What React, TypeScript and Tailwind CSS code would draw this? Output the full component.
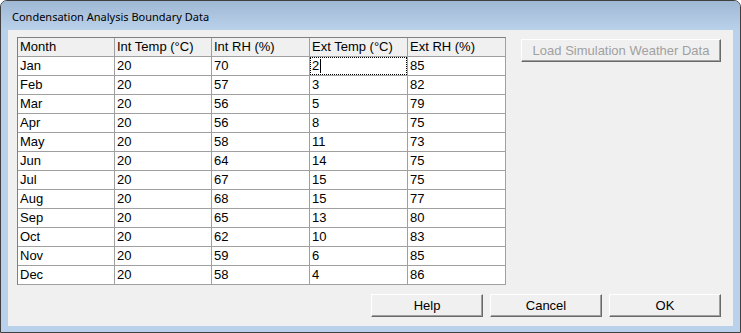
import React from 'react'

const cols = ['Month', 'Int Temp (°C)', 'Int RH (%)', 'Ext Temp (°C)', 'Ext RH (%)']
const widths = ['w-[97px]', 'w-[97px]', 'w-[98px]', 'w-[98px]', 'w-[98px]']

const rows: string[][] = [
  ['Jan', '20', '70', '2', '85'],
  ['Feb', '20', '57', '3', '82'],
  ['Mar', '20', '56', '5', '79'],
  ['Apr', '20', '56', '8', '75'],
  ['May', '20', '58', '11', '73'],
  ['Jun', '20', '64', '14', '75'],
  ['Jul', '20', '67', '15', '75'],
  ['Aug', '20', '68', '15', '77'],
  ['Sep', '20', '65', '13', '80'],
  ['Oct', '20', '62', '10', '83'],
  ['Nov', '20', '59', '6', '85'],
  ['Dec', '20', '58', '4', '86'],
]

const Button = ({ label, disabled, className }: { label: string; disabled?: boolean; className: string }) => (
  <button
    className={`${className} h-[23px] bg-[#f0f0f0] border border-t-white border-l-white border-b-[#696969] border-r-[#696969] shadow-[inset_-1px_-1px_0_#a0a0a0] text-[13px] leading-none ${disabled ? 'text-[#a0a0a0]' : 'text-black'}`}
  >
    {label}
  </button>
)

export default function App() {
  return (
    <div className="w-[741px] h-[333px] bg-white font-['Liberation_Sans',sans-serif]">
      <div className="w-full h-full flex flex-col border border-[#404040] rounded-t-[7px] bg-[#b9d1ea] overflow-hidden">
        <div className="h-[29px] shrink-0 bg-gradient-to-b from-[#9fb8d4] to-[#bad1ea] pl-[11px] pt-[8px] font-['Noto_Sans',sans-serif] text-[11px] leading-[16px] text-black">
          Condensation Analysis Boundary Data
        </div>
        <div className="flex-1 mx-[7px] mb-[6px] bg-[#f0f0f0] relative">
          <div className="flex pl-[9px] pt-[7px]">
            <div className="border-t border-l border-[#808080] bg-white">
              <div className="flex bg-[#f0f0f0]">
                {cols.map((c, i) => (
                  <div
                    key={c}
                    className={`${widths[i]} h-[19px] border-r border-b border-[#a0a0a0] pl-[2px] text-[13px] leading-[18px] text-black whitespace-nowrap`}
                  >
                    {c}
                  </div>
                ))}
              </div>
              {rows.map((r) => (
                <div key={r[0]} className="flex">
                  {r.map((v, i) => (
                    <div
                      key={i}
                      className={`${widths[i]} h-[19px] border-r border-b border-[#a0a0a0] text-[13px] leading-[18px] text-black`}
                    >
                      {r[0] === 'Jan' && i === 3 ? (
                        <div className="h-[18px] border border-dotted border-black pl-[1px] leading-[16px] flex items-center">
                          <span>{v}</span>
                          <span className="inline-block w-px h-[14px] bg-black ml-px" />
                        </div>
                      ) : (
                        <div className="pl-[2px]">{v}</div>
                      )}
                    </div>
                  ))}
                </div>
              ))}
            </div>
            <div className="ml-[15px] mt-px">
              <Button label="Load Simulation Weather Data" disabled className="w-[200px]" />
            </div>
          </div>
          <div className="flex justify-end gap-[7px] pr-[12px] pt-[9px]">
            <Button label="Help" className="w-[112px]" />
            <Button label="Cancel" className="w-[112px]" />
            <Button label="OK" className="w-[112px]" />
          </div>
        </div>
      </div>
    </div>
  )
}
